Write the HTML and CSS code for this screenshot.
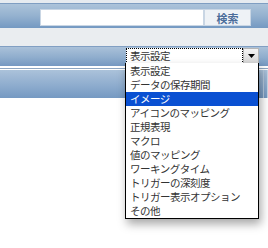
FILE: index.html
```html
<!DOCTYPE html>
<html lang="ja">
<head>
    <meta charset="UTF-8">
    <title>表示設定</title>
    <link rel="stylesheet" href="styles.css">
</head>
<body>
    <div class="page">
        <div class="topbar">
            <div class="search">
                <input type="text" class="search-input">
                <button class="search-button">検索</button>
            </div>
        </div>

        <div class="spacer"></div>

        <div class="toolbar">
            <div class="select">
                <div class="select-value">表示設定</div>
                <div class="select-arrow">
                    <svg width="7" height="4" viewBox="0 0 7 4"><path d="M0 0h7L3.5 4z" fill="#000"/></svg>
                </div>
            </div>
        </div>

        <div class="divider"></div>

        <div class="grid-header">
            <div class="grid-cell"></div>
            <div class="grid-cell grid-cell-last"></div>
        </div>

        <div class="content"></div>

        <!-- 表示設定のドロップダウン -->
        <ul class="dropdown">
            <li>表示設定</li>
            <li>データの保存期間</li>
            <li class="selected">イメージ</li>
            <li>アイコンのマッピング</li>
            <li>正規表現</li>
            <li>マクロ</li>
            <li>値のマッピング</li>
            <li>ワーキングタイム</li>
            <li>トリガーの深刻度</li>
            <li>トリガー表示オプション</li>
            <li>その他</li>
        </ul>
    </div>
</body>
</html>
```

FILE: styles.css
```css
* {
    margin: 0;
    padding: 0;
    box-sizing: border-box;
}

body {
    font-family: "Noto Sans CJK JP", sans-serif;
    font-size: 11px;
    background: white;
    color: #222;
}

.page {
    position: relative;
    width: 268px;
    height: 248px;
    overflow: hidden;
    padding-top: 3px;
    background: #e6ebf0;
}

.topbar {
    height: 25px;
    border-top: 1px solid #7f9ec2;
    background: linear-gradient(to bottom, #acc3da 0%, #94b1cf 50%, #7499c2 100%);
    display: flex;
    justify-content: flex-end;
    align-items: flex-start;
    padding: 5px 17px 0 0;
}

.search {
    display: flex;
    height: 17px;
}

.search-input {
    width: 164px;
    height: 17px;
    border: 1px solid #c9d6e4;
    background: white;
    outline: none;
}

.search-button {
    width: 47px;
    height: 17px;
    border: 1px solid #c9d6e4;
    background: #eef2f6;
    color: #4b6d9a;
    font-family: "Noto Sans CJK JP", sans-serif;
    font-size: 11px;
    font-weight: bold;
    line-height: 14px;
}

.spacer {
    height: 18px;
    background: #eaedf0;
}

.toolbar {
    height: 20px;
    border-top: 1px solid #819fc3;
    background: linear-gradient(to bottom, #aac1d9 0%, #8fadcd 55%, #7598c1 100%);
    display: flex;
    justify-content: flex-end;
    padding: 1px 9px 0 0;
}

.select {
    display: flex;
    width: 133px;
    height: 16px;
    background: white;
}

.select-value {
    flex: 1;
    border: 1px dotted #000;
    padding: 0 3px;
    line-height: 13px;
    font-size: 10.5px;
    letter-spacing: -0.5px;
    color: #333;
}

.select-arrow {
    width: 16px;
    display: flex;
    align-items: center;
    justify-content: center;
    background: linear-gradient(to bottom, #f4f4f4, #d6d6d6);
    border: 1px solid #b5b5b5;
}

.divider {
    height: 4px;
    background: white;
    padding-top: 2px;
}

.divider::after {
    content: "";
    display: block;
    height: 1px;
    background: #8ea6c2;
}

.grid-header {
    height: 28px;
    background: linear-gradient(to bottom, #abc2da 0%, #8eacce 55%, #7599c2 100%);
    display: flex;
}

.grid-cell {
    flex: 1;
}

.grid-cell-last {
    flex: 0 0 5px;
    border-left: 1px solid #b7cadf;
    border-right: 1px solid #c5d4e5;
}

.content {
    height: 160px;
    background: white;
}

.dropdown {
    position: absolute;
    left: 125px;
    top: 63px;
    width: 134px;
    list-style: none;
    background: white;
    border: 1px solid #000;
    border-top: none;
    box-shadow: 2px 5px 9px rgba(0, 0, 0, 0.35);
    padding-top: 1px;
    z-index: 2;
}

.dropdown li {
    height: 14px;
    line-height: 14px;
    padding-left: 4px;
    font-size: 10.5px;
    letter-spacing: -0.5px;
    color: #333;
    white-space: nowrap;
    overflow: hidden;
}

.dropdown li.selected {
    background: #0a50d2;
    color: white;
}
```
